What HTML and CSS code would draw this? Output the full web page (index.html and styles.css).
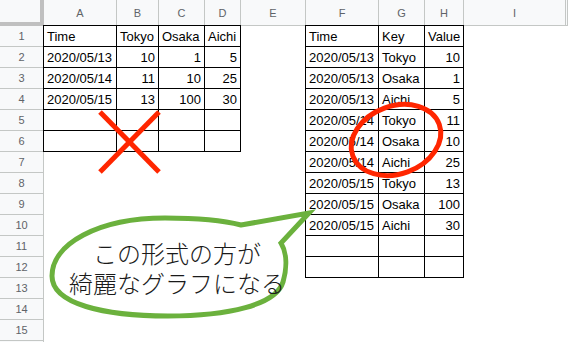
FILE: index.html
```html
<!doctype html>
<html>

<head>
    <title>sheet</title>
    <meta charset="UTF-8">
    <link rel="stylesheet" href="styles.css">
</head>

<body>
    <div class="page">
        <div class="sheet">
            <div class="corner"></div>
            <div class="ch">A</div>
            <div class="ch">B</div>
            <div class="ch">C</div>
            <div class="ch">D</div>
            <div class="ch">E</div>
            <div class="ch">F</div>
            <div class="ch">G</div>
            <div class="ch">H</div>
            <div class="ch">I</div>
            <div class="ch"></div>

            <div class="rh">1</div>
            <div class="rh">2</div>
            <div class="rh">3</div>
            <div class="rh">4</div>
            <div class="rh">5</div>
            <div class="rh">6</div>
            <div class="rh">7</div>
            <div class="rh">8</div>
            <div class="rh">9</div>
            <div class="rh">10</div>
            <div class="rh">11</div>
            <div class="rh">12</div>
            <div class="rh">13</div>
            <div class="rh">14</div>
            <div class="rh">15</div>
            <div class="rh"></div>

            <!-- 横持ちの表 -->
            <div class="tbl wide">
                <div class="c">Time</div>
                <div class="c">Tokyo</div>
                <div class="c">Osaka</div>
                <div class="c">Aichi</div>
                <div class="c">2020/05/13</div>
                <div class="c n">10</div>
                <div class="c n">1</div>
                <div class="c n">5</div>
                <div class="c">2020/05/14</div>
                <div class="c n">11</div>
                <div class="c n">10</div>
                <div class="c n">25</div>
                <div class="c">2020/05/15</div>
                <div class="c n">13</div>
                <div class="c n">100</div>
                <div class="c n">30</div>
                <div class="c"></div>
                <div class="c"></div>
                <div class="c"></div>
                <div class="c"></div>
                <div class="c"></div>
                <div class="c"></div>
                <div class="c"></div>
                <div class="c"></div>
            </div>

            <!-- 縦持ちの表 -->
            <div class="tbl long">
                <div class="c">Time</div>
                <div class="c">Key</div>
                <div class="c">Value</div>
                <div class="c">2020/05/13</div>
                <div class="c">Tokyo</div>
                <div class="c n">10</div>
                <div class="c">2020/05/13</div>
                <div class="c">Osaka</div>
                <div class="c n">1</div>
                <div class="c">2020/05/13</div>
                <div class="c">Aichi</div>
                <div class="c n">5</div>
                <div class="c">2020/05/14</div>
                <div class="c">Tokyo</div>
                <div class="c n">11</div>
                <div class="c">2020/05/14</div>
                <div class="c">Osaka</div>
                <div class="c n">10</div>
                <div class="c">2020/05/14</div>
                <div class="c">Aichi</div>
                <div class="c n">25</div>
                <div class="c">2020/05/15</div>
                <div class="c">Tokyo</div>
                <div class="c n">13</div>
                <div class="c">2020/05/15</div>
                <div class="c">Osaka</div>
                <div class="c n">100</div>
                <div class="c">2020/05/15</div>
                <div class="c">Aichi</div>
                <div class="c n">30</div>
                <div class="c"></div>
                <div class="c"></div>
                <div class="c"></div>
                <div class="c"></div>
                <div class="c"></div>
                <div class="c"></div>
            </div>
        </div>

        <!-- 書き込み（バツ、丸、吹き出し） -->
        <svg class="marks" width="568" height="342" viewBox="0 0 568 342">
            <g stroke="#ff2600" stroke-width="5" fill="none">
                <line x1="100" y1="112" x2="159" y2="172" />
                <line x1="159" y1="112" x2="100" y2="172" />
                <ellipse cx="396" cy="140" rx="46" ry="34" transform="rotate(-20 396 140)" />
            </g>
            <path d="M241 225 L309 213 L281 243
                     C287 253 287 268 283 282
                     C276 305 228 316 168 316
                     C104 316 52 304 52 276
                     C52 244 98 218 165 218
                     C196 218 222 220 241 225 Z"
                  stroke="#6bb13d" stroke-width="5" fill="none" stroke-linejoin="miter" />
        </svg>
        <div class="say">
            <div>この形式の方が</div>
            <div>綺麗なグラフになる</div>
        </div>
    </div>
</body>

</html>
```

FILE: styles.css
```css
body {
    margin: 0;
    background: #fff;
}

.page {
    position: relative;
    width: 568px;
    height: 342px;
    overflow: hidden;
}

.sheet {
    display: grid;
    grid-template-columns: 44px 73px 42px 46px 36px 65px 73px 46px 39px 102px 1fr;
    grid-template-rows: 26px repeat(16, 21px);
    font-family: "Liberation Sans", Arial, sans-serif;
}

.sheet div {
    box-sizing: border-box;
}

.corner {
    background: #f8f9fa;
    border-right: 4px solid #c0c0c0;
    border-bottom: 4px solid #c0c0c0;
}

.ch,
.rh {
    background: #f8f9fa;
    border-right: 1px solid #c4c7c5;
    border-bottom: 1px solid #c4c7c5;
    color: #5f6368;
    font-size: 11px;
    display: flex;
    align-items: center;
    justify-content: center;
}

.rh {
    grid-column: 1;
}

.tbl {
    display: grid;
    margin: -1px 0 0 -1px;
    border-top: 1px solid #000;
    border-left: 1px solid #000;
    grid-auto-rows: 21px;
}

.wide {
    grid-column: 2 / 6;
    grid-row: 2 / 8;
    grid-template-columns: 73px 42px 46px 36px;
}

.long {
    grid-column: 7 / 10;
    grid-row: 2 / 14;
    grid-template-columns: 73px 46px 39px;
}

.c {
    border-right: 1px solid #000;
    border-bottom: 1px solid #000;
    font-size: 13px;
    line-height: 15px;
    color: #000;
    padding: 0 3px 2px 3px;
    display: flex;
    align-items: flex-end;
    white-space: nowrap;
    overflow: hidden;
}

.n {
    justify-content: flex-end;
}

.marks {
    position: absolute;
    left: 0;
    top: 0;
    pointer-events: none;
}

.say {
    position: absolute;
    left: 52px;
    top: 238px;
    width: 250px;
    text-align: center;
    font-family: "Noto Sans CJK JP", sans-serif;
    font-weight: 300;
    font-size: 24px;
    line-height: 30px;
    color: #1a1a1a;
}
```
